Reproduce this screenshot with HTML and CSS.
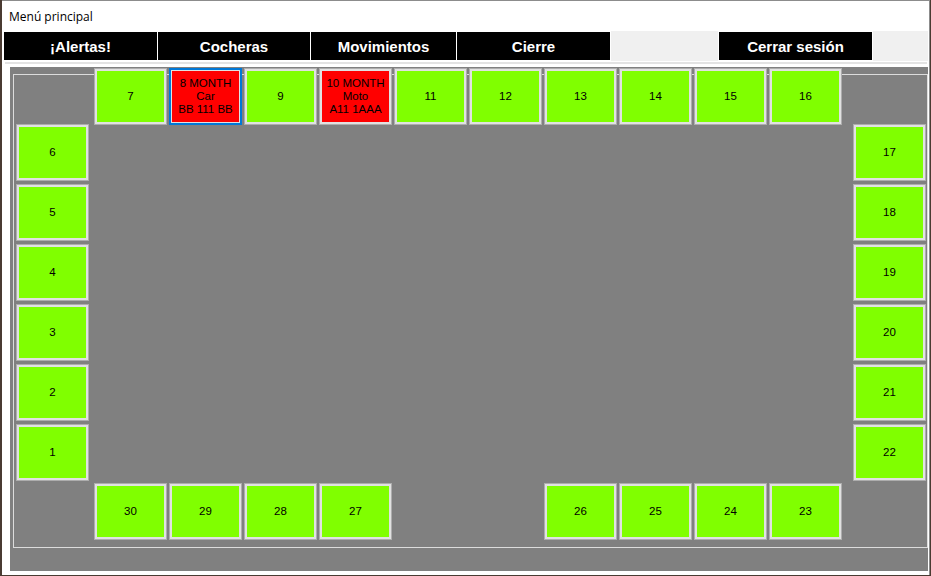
FILE: index.html
```html
<!DOCTYPE html>
<html lang="es">
<head>
<meta charset="utf-8">
<title>Menú principal</title>
<link rel="stylesheet" href="styles.css">
</head>
<body>
<div class="window">
  <div class="titlebar">Menú principal</div>
  <div class="tabstrip">
    <div class="tabgroup">
      <div class="tab tab-alertas">¡Alertas!</div>
      <div class="tab tab-cocheras">Cocheras</div>
      <div class="tab tab-movimientos">Movimientos</div>
      <div class="tab tab-cierre">Cierre</div>
    </div>
    <div class="tab tab-logout">Cerrar sesión</div>
  </div>
  <div class="divider"></div>
  <div class="panel">
    <div class="groupbox"></div>
    <div class="row-top">
      <div class="spot">7</div>
      <div class="spot busy selected">8 MONTH<br>Car<br>BB 111 BB</div>
      <div class="spot">9</div>
      <div class="spot busy">10 MONTH<br>Moto<br>A11 1AAA</div>
      <div class="spot">11</div>
      <div class="spot">12</div>
      <div class="spot">13</div>
      <div class="spot">14</div>
      <div class="spot">15</div>
      <div class="spot">16</div>
    </div>
    <div class="middle">
      <div class="col">
        <div class="spot">6</div>
        <div class="spot">5</div>
        <div class="spot">4</div>
        <div class="spot">3</div>
        <div class="spot">2</div>
        <div class="spot">1</div>
      </div>
      <div class="col">
        <div class="spot">17</div>
        <div class="spot">18</div>
        <div class="spot">19</div>
        <div class="spot">20</div>
        <div class="spot">21</div>
        <div class="spot">22</div>
      </div>
    </div>
    <div class="row-bottom">
      <div class="group">
        <div class="spot">30</div>
        <div class="spot">29</div>
        <div class="spot">28</div>
        <div class="spot">27</div>
      </div>
      <div class="group">
        <div class="spot">26</div>
        <div class="spot">25</div>
        <div class="spot">24</div>
        <div class="spot">23</div>
      </div>
    </div>
  </div>
</div>
</body>
</html>
```
FILE: styles.css
```css
* { box-sizing: border-box; }

body {
  margin: 0;
  background: #4a3b32;
  font-family: "Liberation Sans", Arial, sans-serif;
}

.window {
  margin-left: 2px;
  width: 928px;
  height: 575px;
  background: #ffffff;
  border-top: 1px solid #8c8c8c;
  border-right: 1px solid #8c8c8c;
}

.titlebar {
  height: 30px;
  padding-left: 7px;
  display: flex;
  align-items: center;
  font-family: "Open Sans", "Noto Sans", sans-serif;
  font-size: 12px;
  color: #000;
}

.tabstrip {
  margin-left: 1px;
  width: 925px;
  height: 30px;
  background: #f0f0f0;
  display: flex;
}

.tabgroup {
  display: flex;
  gap: 1px;
  padding: 1px;
  background: #ffffff;
}

.tab {
  height: 28px;
  background: #000;
  color: #fff;
  font-family: "Liberation Sans", Arial, sans-serif;
  font-weight: bold;
  font-size: 15px;
  display: flex;
  align-items: center;
  justify-content: center;
}

.tab-alertas { width: 153px; }
.tab-cocheras { width: 152px; }
.tab-movimientos { width: 145px; }
.tab-cierre { width: 153px; }

.tab-logout {
  margin-left: auto;
  margin-right: 55px;
  width: 155px;
  height: 30px;
  border: 1px solid #ffffff;
}

.divider {
  margin: 1px 2px 0 3px;
  height: 2px;
  background: #e3e3e3;
}

.panel {
  position: relative;
  margin: 3px 0 0 8px;
  width: 918px;
  height: 504px;
  background: #808080;
  padding: 1px 2px 0 6px;
}

.groupbox {
  position: absolute;
  left: 3px;
  top: 7px;
  width: 915px;
  height: 474px;
  border: 1px solid #dcdcdc;
}

.row-top {
  position: relative;
  display: flex;
  gap: 2px;
  margin-left: 78px;
}

.middle {
  position: relative;
  display: flex;
  justify-content: space-between;
  margin-top: -1px;
}

.col {
  display: flex;
  flex-direction: column;
  gap: 3px;
}

.row-bottom {
  position: relative;
  display: flex;
  gap: 152px;
  margin-left: 78px;
  margin-top: 2px;
}

.group {
  display: flex;
  gap: 2px;
}

.spot {
  width: 73px;
  height: 57px;
  background: #80ff00;
  border: 1px solid #adadad;
  box-shadow: inset 0 0 0 2px #e1e1e1;
  display: flex;
  align-items: center;
  justify-content: center;
  text-align: center;
  font-family: "Liberation Sans", Arial, sans-serif;
  font-size: 11.5px;
  line-height: 13px;
  color: #000;
}

.spot.busy {
  background: #ff0000;
}

.spot.selected {
  border-color: #0078d7;
  box-shadow: inset 0 0 0 1px #0078d7, inset 0 0 0 2px #e1e1e1;
}
```
